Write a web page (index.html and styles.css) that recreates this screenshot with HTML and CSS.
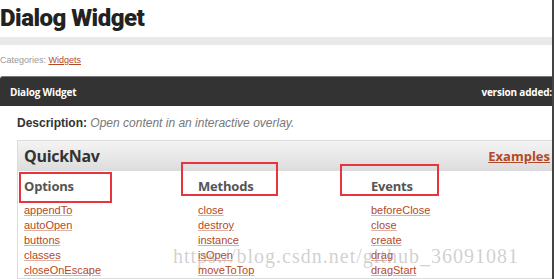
FILE: index.html
```html
<!DOCTYPE html>
<html lang="en">
<head>
    <meta charset="UTF-8">
    <title>Dialog Widget</title>
    <link rel="stylesheet" href="styles.css">
</head>
<body>

    <h1 class="page-title">Dialog Widget</h1>
    <div class="title-rule"></div>

    <div class="categories">Categories: <a href="#">Widgets</a></div>

    <div class="entry-bar">
        <span class="entry-name">Dialog Widget</span>
        <span class="entry-version">version added: 1.0</span>
    </div>

    <div class="entry-body">
        <p class="desc"><strong>Description:</strong> <em>Open content in an interactive overlay.</em></p>

        <div class="quicknav">
            <div class="quicknav-head">
                <span class="quicknav-title">QuickNav</span>
                <a href="#" class="examples">Examples</a>
            </div>
            <div class="quicknav-cols">
                <div class="col">
                    <h3 class="col-title boxed boxed-options">Options</h3>
                    <a href="#">appendTo</a>
                    <a href="#">autoOpen</a>
                    <a href="#">buttons</a>
                    <a href="#">classes</a>
                    <a href="#">closeOnEscape</a>
                </div>
                <div class="col">
                    <h3 class="col-title boxed boxed-methods">Methods</h3>
                    <a href="#">close</a>
                    <a href="#">destroy</a>
                    <a href="#">instance</a>
                    <a href="#">isOpen</a>
                    <a href="#">moveToTop</a>
                </div>
                <div class="col">
                    <h3 class="col-title boxed boxed-events">Events</h3>
                    <a href="#">beforeClose</a>
                    <a href="#">close</a>
                    <a href="#">create</a>
                    <a href="#">drag</a>
                    <a href="#">dragStart</a>
                </div>
            </div>
        </div>
    </div>

    <div class="watermark">https://blog.csdn.net/github_36091081</div>
    <div class="edge"></div>

</body>
</html>
```

FILE: styles.css
```css
body {
    margin: 0;
    font-family: "Liberation Sans", Arial, sans-serif;
    background-color: #fff;
    color: #333;
    width: 554px;
    height: 279px;
    overflow: hidden;
    position: relative;
}
.page-title {
    margin: 0;
    padding: 3px 0 0 0;
    height: 34px;
    font-family: Roboto, sans-serif;
    font-weight: 900;
    font-size: 24px;
    letter-spacing: -0.5px;
    line-height: 30px;
    color: #222;
}
.title-rule {
    height: 8px;
    background-color: #e9e9e9;
    margin-right: 2px;
}
.categories {
    margin-top: 10px;
    font-size: 9px;
    line-height: 11px;
    color: #999;
}
.categories a {
    color: #b24926;
}
.entry-bar {
    margin-top: 10px;
    height: 29px;
    background-color: #333;
    border-top: 1px solid #777;
    border-radius: 3px 0 0 0;
    display: flex;
    justify-content: space-between;
    align-items: center;
    padding-left: 10px;
    font-family: "Open Sans", sans-serif;
    font-weight: 700;
    font-size: 10px;
    color: #fff;
    letter-spacing: -0.2px;
}
.entry-version {
    margin-right: -14px;
}
.entry-body {
    padding-left: 17px;
}
.desc {
    margin: 10px 0 0 0;
    font-size: 12px;
    line-height: 14px;
}
.desc strong {
    color: #333;
}
.desc em {
    color: #777;
}
.quicknav {
    margin-top: 10px;
    border: 1px solid #ddd;
    border-right: none;
}
.quicknav-head {
    height: 30px;
    background: linear-gradient(#f4f4f4, #dcdcdc);
    display: flex;
    justify-content: space-between;
    align-items: center;
    padding: 0 4px 0 6px;
}
.quicknav-title {
    font-family: "Open Sans", sans-serif;
    font-weight: 700;
    font-size: 16px;
    color: #333;
    letter-spacing: -0.3px;
}
.examples {
    font-family: "Open Sans", sans-serif;
    font-weight: 700;
    font-size: 13px;
    color: #b24926;
}
.quicknav-cols {
    display: grid;
    grid-template-columns: 174px 173px 1fr;
    padding: 2px 6px 0 6px;
}
.col {
    display: flex;
    flex-direction: column;
    position: relative;
}
.col-title {
    margin: 0 0 4px 0;
    height: 26px;
    line-height: 26px;
    font-family: "Open Sans", sans-serif;
    font-weight: 700;
    font-size: 13px;
    color: #555;
    letter-spacing: -0.2px;
}
.col a {
    font-size: 11px;
    line-height: 15px;
    color: #b24926;
    text-decoration-color: #e0b0a0;
    width: max-content;
}
.boxed::after {
    content: "";
    position: absolute;
    border: 2px solid #e8343c;
}
.boxed-options::after {
    left: -5px;
    top: -1px;
    width: 89px;
    height: 27px;
}
.boxed-methods::after {
    left: -17px;
    top: -11px;
    width: 93px;
    height: 30px;
}
.boxed-events::after {
    left: -31px;
    top: -9px;
    width: 95px;
    height: 28px;
}
.watermark {
    position: absolute;
    left: 173px;
    top: 245px;
    font-family: "Liberation Serif", serif;
    font-size: 20px;
    letter-spacing: 1px;
    color: rgba(150, 150, 150, 0.45);
    pointer-events: none;
}
.edge {
    position: absolute;
    right: 0;
    top: 0;
    width: 2px;
    height: 279px;
    background-color: #444;
}
```
